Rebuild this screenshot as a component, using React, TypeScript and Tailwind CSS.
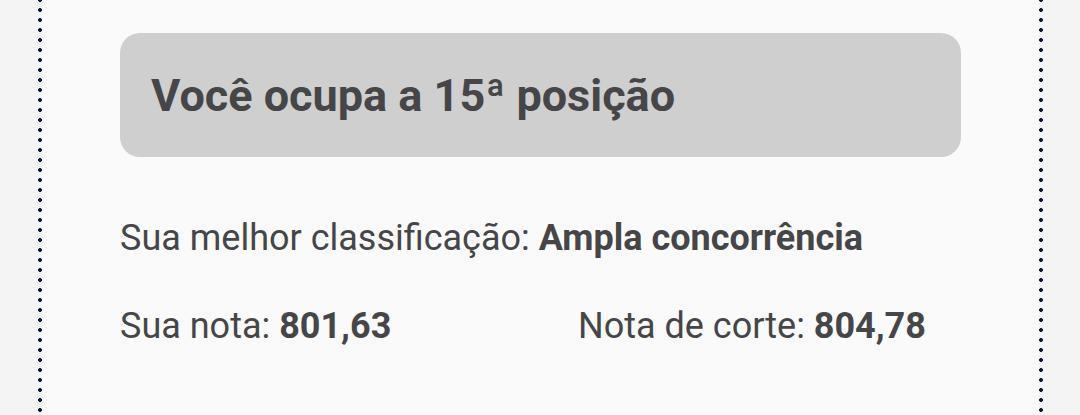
import React from "react";

const dots =
  "w-[4px] shrink-0 bg-[radial-gradient(circle,#0c1a3c_1.7px,transparent_2.2px)] bg-[length:4px_10px] bg-[position:0_5px] bg-repeat-y";

export default function App() {
  return (
    <div
      className="w-[1080px] h-[415px] overflow-hidden bg-[#f4f4f4] flex pl-[38px] pr-[37px]"
      style={{ fontFamily: "Roboto, 'Noto Sans', sans-serif" }}
    >
      <div className={dots} />
      <div className="flex-1 bg-[#fafafa] pt-[33px] px-[78px] text-[#464649]">
        <div className="h-[124px] rounded-[20px] bg-[#cfcfcf] pl-[31px] flex items-center">
          <span className="text-[45px] font-bold leading-none">
            Você ocupa a 15ª posição
          </span>
        </div>
        <div className="mt-[57px] text-[36px] leading-[48px]">
          Sua melhor classificação: <span className="font-bold">Ampla concorrência</span>
        </div>
        <div className="mt-[40px] text-[36px] leading-[48px] flex">
          <div className="w-[458px]">
            Sua nota: <span className="font-bold">801,63</span>
          </div>
          <div>
            Nota de corte: <span className="font-bold">804,78</span>
          </div>
        </div>
      </div>
      <div className={dots} />
    </div>
  );
}
